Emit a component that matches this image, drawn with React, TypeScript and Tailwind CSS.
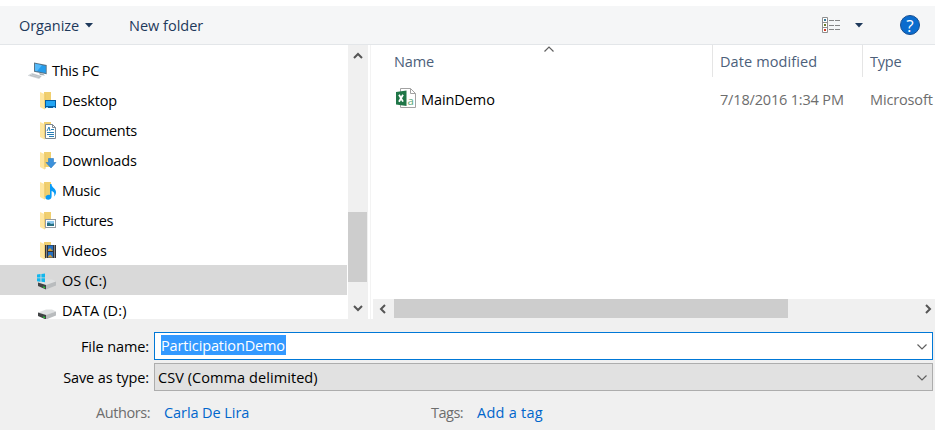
import type { ReactNode } from "react";

function Folder({ children }: { children?: ReactNode }) {
  return (
    <svg width="18" height="18" viewBox="0 0 18 18" className="shrink-0">
      <path d="M4 0H11V15H4Z" fill="#f0cf6f" />
      <path d="M0 0L4.5 2V17.5L0 15Z" fill="#ffe6a0" />
      <path d="M4.5 2H5.5V16.5L4.5 17.5Z" fill="#e8c566" />
      {children}
    </svg>
  );
}

const DesktopIcon = () => (
  <Folder>
    <rect x="5" y="8" width="11" height="8" fill="#075da0" />
    <rect x="6" y="9" width="9" height="5" fill="#22a5f4" />
    <path d="M6 15.5H8M13 15.5H15" stroke="#8ad1ff" />
  </Folder>
);
const DocumentsIcon = () => (
  <Folder>
    <path d="M5.5 2.5H12.5L15.5 5.5V16.5H5.5Z" fill="#fff" stroke="#7c8791" />
    <path d="M12.5 2.5V5.5H15.5" fill="none" stroke="#7c8791" />
    <path d="M7 9L9 5L10 9M11 7.5H14M7 10.5H14M7 12.5H14M9 14.5H14" fill="none" stroke="#287db5" />
  </Folder>
);
const DownloadsIcon = () => (
  <Folder>
    <path d="M8.5 6.5H13.5V10.5H16L11 16L6 10.5H8.5Z" fill="#3b91db" stroke="#2e7ac0" strokeWidth=".6" />
  </Folder>
);
const MusicIcon = () => (
  <Folder>
    <path d="M10 2H11.5C11.5 5.5 16 6.5 16 10C16 12 15 13.5 14 14.5C15 11.5 14 10 11.6 9V14.5C11.6 18.4 5.5 18.8 5.5 15.5C5.5 13.3 8 12.4 10 13Z" fill="#0a9bf5" />
  </Folder>
);
const PicturesIcon = () => (
  <Folder>
    <rect x="5.5" y="7.5" width="10" height="8" fill="#fff" stroke="#969ba1" />
    <rect x="7" y="9" width="7" height="5" fill="#8ec8ee" />
    <path d="M7 13V11L9 10.5L11 12L14 11.5V14H7Z" fill="#287082" />
  </Folder>
);
const VideosIcon = () => (
  <Folder>
    <rect x="5" y="3" width="11" height="13" fill="#333437" />
    <path d="M6.5 3.5V16M14.5 3.5V16" stroke="#d5d5d5" strokeDasharray="1 1" />
    <rect x="8" y="3.5" width="5" height="5.5" fill="#246fc1" />
    <rect x="8" y="10" width="5" height="5.5" fill="#246fc1" />
    <path d="M8 8L10 6L13 9H8ZM8 14.5L10 12.5L13 15.5H8Z" fill="#d49c34" />
  </Folder>
);

const PcIcon = () => (
  <svg width="20" height="18" viewBox="0 0 20 18" className="shrink-0">
    <path d="M6 0.5L18.7 3V12.3L6 9.8Z" fill="#587487" />
    <path d="M7 1.8L17.8 3.9V11L7 8.8Z" fill="#249cec" />
    <path d="M7 1.8L14 3.2L9 9.2L7 8.8Z" fill="#55bafa" />
    <path d="M11 11L15 11.8L17 13.4L12 13Z" fill="#a3abb0" />
    <path d="M-.5 13.5L4 11L14 14L11 17Z" fill="#d3d7da" />
    <path d="M2 13.3L12 15.8M4 12.2L13 14.7" stroke="#a9afb4" strokeWidth=".6" />
  </svg>
);

function DriveIcon({ windows }: { windows?: boolean }) {
  return (
    <svg width="20" height="18" viewBox="0 0 20 18" className="mt-0.5 shrink-0">
      <path d="M1 9.5L9 6.5H15L19 8.5L9 12.5Z" fill="#dfe1e2" />
      <path d="M1 9.5L9 12V16.5L1 13Z" fill="#414345" />
      <path d="M9 12L19 8.5V12.5L9 16.5Z" fill="#b9bcbe" />
      <path d="M6 13.2L8 14V15.2L6 14.4Z" fill="#1dd52b" />
      {windows && (
        <path d="M0 1.5L3.5 1V4.4H0ZM4.4 .9L8 .4V4.4H4.4ZM0 5.3H3.5V8.7L0 8.2ZM4.4 5.3H8V9.3L4.4 8.8Z" fill="#12b7ee" />
      )}
    </svg>
  );
}

const ExcelIcon = () => (
  <svg width="20" height="20" viewBox="0 0 20 20" className="shrink-0">
    <path d="M4.5 .5H14.5L19.5 5.5V19.5H4.5Z" fill="#fff" stroke="#a2a2a2" />
    <path d="M14.5 .5V5.5H19.5" fill="none" stroke="#a2a2a2" />
    <path d="M0 4L10.5 2.5V18L0 16.5Z" fill="#1f7647" />
    <path d="M3 6.8L7 13.6M7 6.7L3 13.8" stroke="#fff" strokeWidth="1.8" />
    <text x="11.5" y="16.5" fill="#58a878" fontSize="11.5" fontFamily="Open Sans, sans-serif">a</text>
  </svg>
);

const ViewIcon = () => (
  <svg width="18" height="16" viewBox="0 0 18 16">
    <path d="M.5 .5H5.5V15.5H.5ZM.5 5.5H5.5M.5 10.5H5.5" fill="#fff" stroke="#909090" />
    <path d="M7 3.5H12M13 3.5H18M7 8.5H12M13 8.5H18M7 12.5H12M13 12.5H18" stroke="#858585" />
    <path d="M2 3H4" stroke="#377a9c" strokeWidth="2" />
    <path d="M2 8H4" stroke="#6c7d2a" strokeWidth="2" />
    <path d="M2 13H4" stroke="#d03c27" strokeWidth="2" />
  </svg>
);

const Triangle = () => (
  <svg width="8" height="5" viewBox="0 0 8 5"><path d="M0 0H8L4 4.5Z" fill="#1e395b" /></svg>
);

function Chevron({ d, w, h, bold }: { d: string; w: number; h: number; bold?: boolean }) {
  return (
    <svg width={w} height={h} viewBox={`0 0 ${w} ${h}`} className="shrink-0">
      <path d={d} fill="none" stroke={bold ? "#555" : "#606060"} strokeWidth={bold ? 2 : 1.2} />
    </svg>
  );
}

const folders = [
  { name: "Desktop", icon: <DesktopIcon />, fit: "tracking-[-0.14px]" },
  { name: "Documents", icon: <DocumentsIcon />, fit: "tracking-[-0.3px]" },
  { name: "Downloads", icon: <DownloadsIcon />, fit: "tracking-[-0.07px]" },
  { name: "Music", icon: <MusicIcon />, fit: "tracking-[-0.28px]" },
  { name: "Pictures", icon: <PicturesIcon />, fit: "tracking-[-0.42px]" },
  { name: "Videos", icon: <VideosIcon />, fit: "tracking-normal" },
];

export default function App() {
  return (
    <div className="flex h-[430px] w-[935px] flex-col overflow-hidden bg-white pt-1.5 font-['Open_Sans',sans-serif] text-[14.5px] leading-5 whitespace-nowrap text-black">
      <header className="flex h-[39px] shrink-0 items-center border-b border-[#e3e6e9] bg-[#f5f6f7] pl-[19px] text-[#1e395b]">
        <button className="flex w-[110px] items-center gap-1.5">
          <span className="w-[60px] pt-0.5 text-left tracking-[-0.08px]">Organize</span>
          <Triangle />
        </button>
        <button className="pt-px">New folder</button>
        <div className="ml-auto flex items-center pr-[15px]">
          <span className="mr-px"><ViewIcon /></span>
          <span className="ml-[14px]"><Triangle /></span>
          <span className="ml-[37px] flex size-5 items-center justify-center rounded-full border border-[#174e91] bg-[#0a6cce] text-[17px] leading-none text-white">?</span>
        </div>
      </header>

      <main className="flex h-[274px] shrink-0">
        <nav className="h-full w-[347px] overflow-hidden pt-2.5">
          <div className="flex h-[30px] items-center gap-1 pt-0.5 pl-7">
            <PcIcon />
            <span className="tracking-[-0.3px]">This PC</span>
          </div>
          {folders.map((f) => (
            <div key={f.name} className="flex h-[30px] items-center gap-1 pt-0.5 pl-10">
              {f.icon}
              <span className={f.fit}>{f.name}</span>
            </div>
          ))}
          <div className="flex h-[30px] items-center gap-[5px] bg-[#d9d9d9] pt-0.5 pl-[37px]">
            <DriveIcon windows />
            <span>OS (C:)</span>
          </div>
          <div className="flex h-[30px] items-center gap-[5px] pt-0.5 pl-[37px]">
            <DriveIcon />
            <span className="tracking-[0.12px]">DATA (D:)</span>
          </div>
        </nav>
        <div className="ml-px flex w-5 flex-col bg-[#f0f0f0]">
          <div className="flex h-[21px] items-center justify-center pr-px">
            <Chevron w={10} h={7} d="M1 6L5 2L9 6" bold />
          </div>
          <div className="mt-[146px] h-[70px] w-[19px] bg-[#cdcdcd]" />
          <div className="mt-auto flex h-[21px] items-center justify-center pr-px">
            <Chevron w={10} h={7} d="M1 1L5 5L9 1" bold />
          </div>
        </div>
        <section className="ml-0.5 flex min-w-0 flex-1 flex-col border-l border-[#f3f3f3] pl-0.5">
          <div className="flex h-8 shrink-0 text-[#4c607a]">
            <div className="flex w-[340px] border-r border-[#e5e5e5] pl-[21px]">
              <span className="mt-[7px] w-[150px] tracking-[-0.1px]">Name</span>
              <span className="pt-px"><Chevron w={10} h={6} d="M.5 5.5L5 1L9.5 5.5" /></span>
            </div>
            <div className="w-[150px] border-r border-[#e5e5e5] pt-[7px] pl-[7px] tracking-[0.1px]">Date modified</div>
            <div className="pt-[7px] pl-[7px] tracking-[-0.2px]">Type</div>
          </div>
          <div className="mt-2 flex h-[30px] items-center pl-[23px] text-[#6d6d6d]">
            <span className="-mt-1"><ExcelIcon /></span>
            <span className="ml-[5px] w-[299px] tracking-[-0.08px] text-black">MainDemo</span>
            <span className="w-[150px] tracking-[-0.17px]">7/18/2016 1:34 PM</span>
            <span className="tracking-[-0.14px]">Microsoft</span>
          </div>
          <div className="mt-auto flex h-5 bg-[#f0f0f0]">
            <div className="flex w-[21px] items-center justify-center pr-0.5">
              <Chevron w={7} h={10} d="M6 1L2 5L6 9" bold />
            </div>
            <div className="h-[19px] w-[394px] bg-[#cdcdcd]" />
            <div className="ml-auto flex items-center pr-[3px]">
              <Chevron w={7} h={10} d="M1 1L5 5L1 9" bold />
            </div>
          </div>
        </section>
      </main>

      <footer className="flex-1 bg-[#f0f0f0] pt-[13px] pr-0.5">
        <div className="flex h-7 items-center">
          <label className="w-[154px] pt-0.5 pr-[5px] text-right tracking-[-0.1px]">File name:</label>
          <div className="flex h-7 flex-1 items-center justify-between border border-[#0078d7] bg-white pr-[5px] pl-1.5">
            <span className="mb-0.5 h-5 w-[125px] bg-[#3399ff] leading-[22px] tracking-[-0.14px] text-white">ParticipationDemo</span>
            <span className="flex pt-px"><Chevron w={10} h={6} d="M.5 .5L5 5L9.5 .5" /></span>
          </div>
        </div>
        <div className="mt-[3px] flex h-7 items-center">
          <label className="w-[154px] pt-0.5 pr-[5px] text-right tracking-[-0.1px]">Save as type:</label>
          <div className="flex h-7 flex-1 items-center justify-between border border-[#adadad] bg-[#e1e1e1] pr-[5px] pl-[3px]">
            <span className="pt-0.5 tracking-[0.07px]">CSV (Comma delimited)</span>
            <span className="flex pt-px"><Chevron w={10} h={6} d="M.5 .5L5 5L9.5 .5" /></span>
          </div>
        </div>
        <div className="mt-3 flex h-5 items-center text-[#6d6d6d]">
          <span className="w-[164px] pl-24 tracking-[-0.42px]">Authors:</span>
          <span className="w-[267px] tracking-[-0.08px] text-[#0066cc]">Carla De Lira</span>
          <span className="w-[46px] tracking-[-0.5px]">Tags:</span>
          <span className="tracking-[0.25px] text-[#0066cc]">Add a tag</span>
        </div>
      </footer>
    </div>
  );
}
